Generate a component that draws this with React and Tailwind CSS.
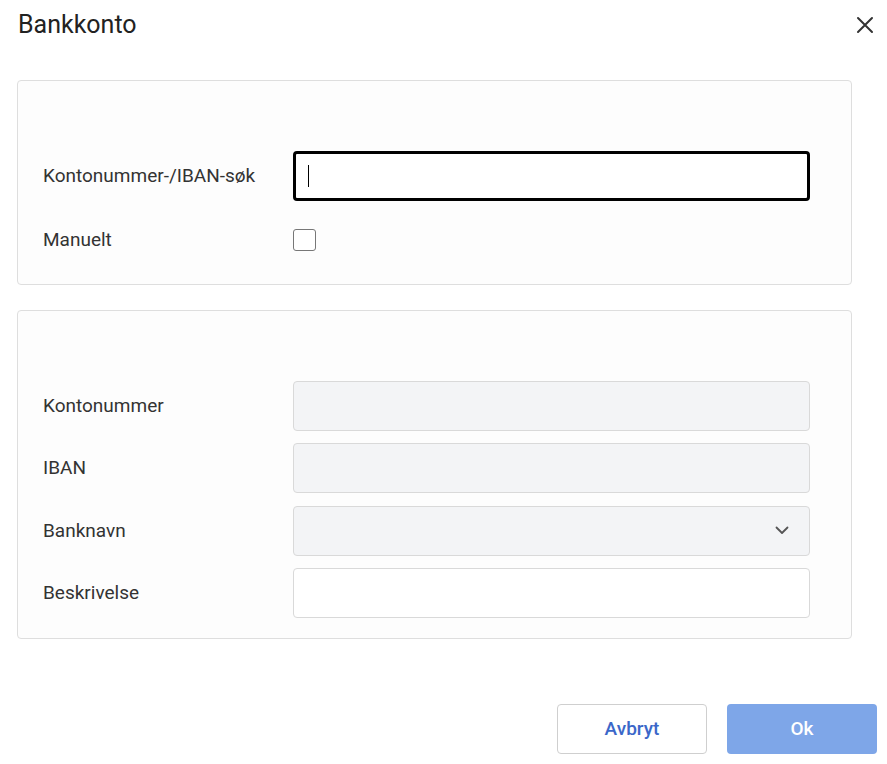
import React from 'react';

const Field = ({ label, children }) => (
  <div className="flex items-center">
    <div className="w-[250px] text-[19px] text-[#333333]">{label}</div>
    <div className="w-[517px]">{children}</div>
  </div>
);

const Disabled = ({ select }) => (
  <div className="h-[50px] rounded border border-[#d9d9d9] bg-[#f3f4f6] flex items-center justify-end pr-5">
    {select && (
      <svg width="14" height="9" viewBox="0 0 14 9" fill="none">
        <path d="M1.5 1.5 7 7l5.5-5.5" stroke="#555" strokeWidth="1.8" strokeLinecap="round" strokeLinejoin="round" />
      </svg>
    )}
  </div>
);

export default function App() {
  return (
    <div className="w-[887px] h-[764px] bg-white relative" style={{ fontFamily: 'Roboto, "Liberation Sans", sans-serif' }}>
      <div className="flex items-center justify-between pl-[18px] pr-[12px] h-[50px]">
        <h1 className="text-[25px] text-[#222222] font-normal">Bankkonto</h1>
        <svg width="18" height="18" viewBox="0 0 18 18" className="mr-[1px]">
          <path d="M2 2l14 14M16 2 2 16" stroke="#333" strokeWidth="2" strokeLinecap="round" />
        </svg>
      </div>

      <div className="ml-[17px] mt-[30px] w-[835px] h-[205px] rounded border border-[#dedede] bg-[#fdfdfd] pl-[25px] pt-[70px]">
        <Field label="Kontonummer-/IBAN-søk">
          <div className="h-[50px] rounded border-[3px] border-black bg-white flex items-center pl-3">
            <div className="w-px h-[22px] bg-black" />
          </div>
        </Field>
        <div className="flex items-center mt-[25px]">
          <div className="w-[250px] text-[19px] text-[#333333]">Manuelt</div>
          <div className="w-[23px] h-[22px] rounded-[3px] border border-[#777] bg-white" />
        </div>
      </div>

      <div className="ml-[17px] mt-[25px] w-[835px] h-[329px] rounded border border-[#dedede] bg-[#fdfdfd] pl-[25px] pt-[70px] flex flex-col gap-[12.4px]">
        <Field label="Kontonummer"><Disabled /></Field>
        <Field label="IBAN"><Disabled /></Field>
        <Field label="Banknavn"><Disabled select /></Field>
        <Field label="Beskrivelse">
          <div className="h-[50px] rounded border border-[#d9d9d9] bg-white" />
        </Field>
      </div>

      <div className="flex justify-end gap-[20px] pr-[10px] mt-[65px]">
        <button className="w-[150px] h-[50px] rounded border border-[#cfcfcf] bg-white text-[#3b67c9] text-[19px] font-medium">Avbryt</button>
        <button className="w-[150px] h-[50px] rounded bg-[#7ea6e8] text-white text-[19px] font-medium">Ok</button>
      </div>
    </div>
  );
}
